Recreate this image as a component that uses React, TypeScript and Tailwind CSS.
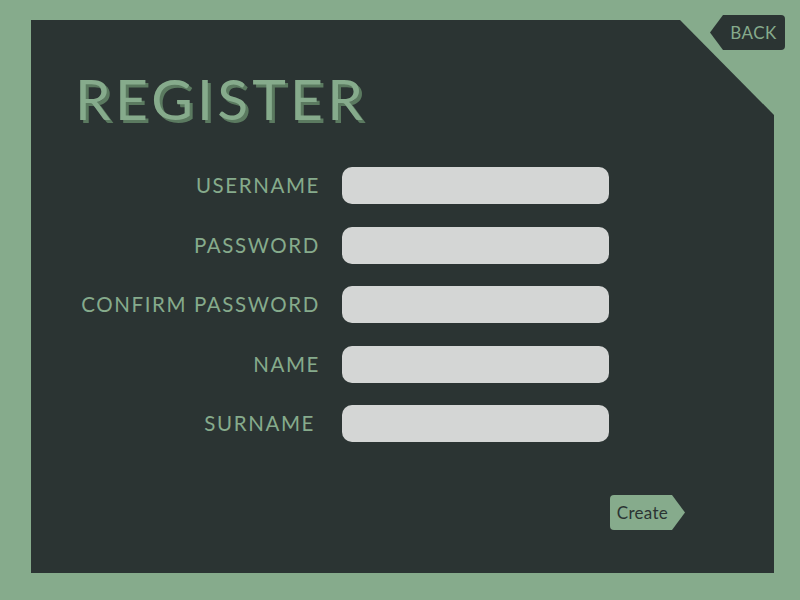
const fields = ['USERNAME', 'PASSWORD', 'CONFIRM PASSWORD', 'NAME', 'SURNAME'];

export default function App() {
  return (
    <div className="w-[800px] h-[600px] bg-[#86ab8c] pt-[20px] pl-[31px] relative font-['Lato',sans-serif]">
      <div className="w-[743px] h-[553px] bg-[#2b3433] [clip-path:polygon(0_0,649px_0,743px_95px,743px_100%,0_100%)] flex flex-col">
        <h1 className="mt-[50px] ml-[44px] text-[57px] leading-none font-normal tracking-[4.2px] text-[#86ab8c] [text-shadow:3px_3px_0_#5b7a60]">
          REGISTER
        </h1>

        <div className="mt-[40px] grid grid-cols-[289px_267px] gap-x-[22px] gap-y-[22.5px] items-center">
          {fields.map((f) => (
            <div key={f} className="contents">
              <label
                className={`text-right text-[20.5px] tracking-[1.6px] text-[#86ab8c] ${f === 'SURNAME' ? 'pr-[5px]' : ''}`}
              >
                {f}
              </label>
              <input className="h-[37px] rounded-[10px] bg-[#d4d6d5] outline-none px-3" />
            </div>
          ))}
        </div>

        <div className="flex-1" />
        <div className="pl-[579px] pb-[43px]">
          <button className="w-[75px] h-[35px] bg-[#86ab8c] rounded-l-[4px] [clip-path:polygon(0_0,62px_0,100%_50%,62px_100%,0_100%)] text-[17px] tracking-[0.3px] text-[#2b3433] pr-[10px] text-center">
            Create
          </button>
        </div>
      </div>

      <button className="absolute left-[710px] top-[15px] w-[75px] h-[35px] bg-[#2b3433] rounded-r-[4px] [clip-path:polygon(13px_0,100%_0,100%_100%,13px_100%,0_50%)] text-[17px] tracking-[0.5px] text-[#86ab8c] pl-[12px]">
        BACK
      </button>
    </div>
  );
}
